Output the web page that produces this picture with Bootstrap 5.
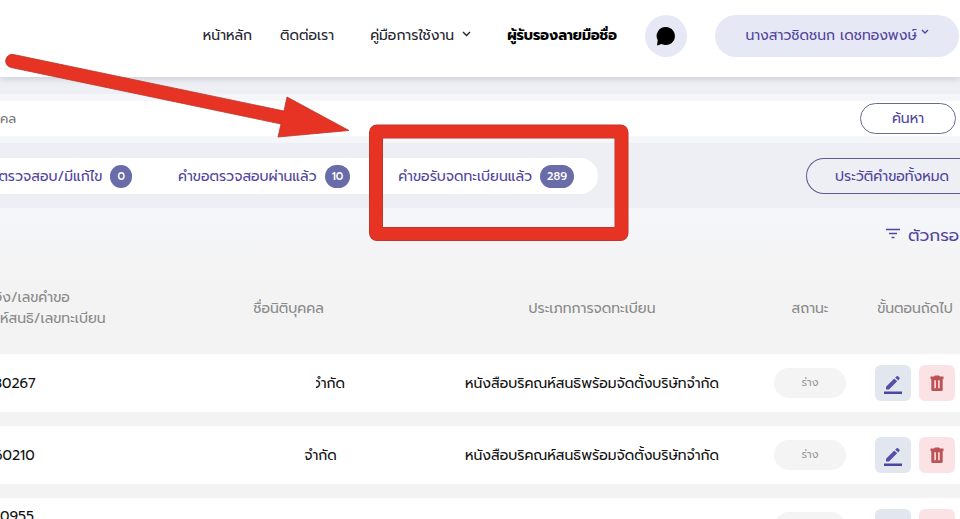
<!DOCTYPE html>
<html lang="th">
<head>
<meta charset="utf-8">
<meta name="viewport" content="width=device-width, initial-scale=1">
<title>คำขอจดทะเบียน</title>
<link href="https://cdn.jsdelivr.net/npm/bootstrap@5.3.0/dist/css/bootstrap.min.css" rel="stylesheet">
<style>
  body { font-family: "Prompt", "Noto Sans Thai", "Noto Sans", sans-serif; font-size: 14px; line-height: 21px; color: #111; background: #f3f3f3; }
  a { text-decoration: none; }
  .page-root { position: relative; overflow: hidden; height: 100vh; }
  .top-bar { height: 77px; padding: 0 1px 6px 0; background: #fff; box-shadow: 0 2px 6px rgba(60,60,90,.18); position: relative; }
  .top-bar a, .top-bar button { white-space: nowrap; }
  .menu-link { color: #24242e; background: none; }
  .menu-gap { margin-right: 36px; }
  .chat-btn { width: 42px; height: 42px; background: #e7e8f5; }
  .user-btn { width: 244px; height: 42px; background: #e7e8f5; color: #51459e; }
  .upper { background: #eeeff4; padding: 17px 0 14px; }
  .search-band { background: #f5f6fa; padding: 7px 0; margin-bottom: 15px; }
  .search-row { background: #fff; height: 35px; padding-right: 4px; }
  .search-row input { font-size: 13px; color: #777; background: none; outline: 0; }
  .search-row input::placeholder { color: #777; opacity: 1; }
  .find-btn { width: 96px; height: 31px; border: 1px solid #6c6a99; color: #51459e; background: #fff; }
  .tab-strip { width: 598px; height: 36px; background: #fff; border-radius: 0 18px 18px 0; }
  .tab-strip a { color: #51459e; white-space: nowrap; }
  .tab-a { width: 132px; }
  .tab-b { margin-left: 46px; }
  .tally { background: #696ca8; color: #fff; font-size: 11px; font-weight: 500; line-height: 23px; padding: 0 7px; border-radius: 12px; }
  .history-btn { width: 154px; height: 36px; border: 1px solid #5c5a90; border-right: 0; border-radius: 18px 0 0 18px; color: #51459e; background: none; padding-left: 28px; white-space: nowrap; }
  .lower { background: linear-gradient(#f5f6fa, #f3f3f3 70px); }
  .filter-btn { width: 74px; height: 54px; font-size: 17px; color: #51459e; background: none; white-space: nowrap; }
  .req-table { width: 100%; table-layout: fixed; border-collapse: separate; border-spacing: 0 14px; }
  .req-table th { height: 64px; padding: 0; font-weight: 400; color: #8a8a8a; white-space: nowrap; }
  .req-table td { height: 58px; padding: 0; background: #fff; }
  .req-table tr > :last-child { padding-left: 14px; }
  .c-no { width: 157px; } .c-name { width: 263px; } .c-status { width: 92px; } .c-next { width: 104px; }
  .num { display: block; margin-left: -6px; }
  .part { display: inline-flex; justify-content: flex-end; overflow: hidden; vertical-align: middle; width: 29px; margin-left: 84px; }
  .name-b { margin-left: 64px; }
  .info-dot { display: inline-block; width: 14px; height: 14px; border-radius: 50%; background: #5650a8; margin-left: 118px; vertical-align: middle; }
  .draft { display: inline-block; width: 72px; line-height: 30px; border-radius: 15px; background: #f4f4f4; color: #999; font-size: 11px; }
  .act { width: 36px; height: 36px; border-radius: 6px; }
  .act-edit { background: #e2e7ef; }
  .act-del { background: #fbe2e4; }
  .marks { position: absolute; left: 0; top: 0; pointer-events: none; }
</style>
<script src="https://cdn.jsdelivr.net/npm/bootstrap@5.3.0/dist/js/bootstrap.bundle.min.js"></script>
</head>
<body>
<svg width="0" height="0" class="position-absolute" aria-hidden="true">
  <symbol id="pen" viewBox="0 0 20 20"><path d="M3 11.700 11.300 3.400l2.900 2.900L6 14.500H3zM12.300 2.500l1.300-1.300q.7-.6 1.400 0l1.400 1.400q.7.700 0 1.400l-1.300 1.400z" fill="#5650a8"/><path d="M1 16.500h18v2.500H1z" fill="#4b44a0"/></symbol>
  <symbol id="bin" viewBox="0 0 16 18"><path fill-rule="evenodd" d="M1.500 1.500H5L6 .5h4l1 1h3.500V4h-.8v10.500q0 1.500-1.500 1.500H3.800q-1.500 0-1.500-1.500V4h-.8zM5.300 5.200v8h1.600v-8zm3.800 0v8h1.600v-8z" fill="#bd5357"/></symbol>
</svg>
<div class="page-root">
  <nav class="top-bar d-flex align-items-center justify-content-end">
    <a href="#" class="menu-link me-4">หน้าหลัก</a>
    <a href="#" class="menu-link menu-gap ms-1">ติดต่อเรา</a>
    <button class="menu-link menu-gap border-0 p-0">คู่มือการใช้งาน<svg class="ms-2 mb-1" width="9" height="6" viewBox="0 0 9 6" fill="none" stroke="#24242e" stroke-width="1.400"><path d="m1 1 3.500 3.500L8 1"/></svg></button>
    <a href="#" class="menu-link fw-bold text-black me-4">ผู้รับรองลายมือชื่อ</a>
    <button class="chat-btn border-0 rounded-circle p-0 ms-1 me-4" aria-label="แชท"><svg width="20" height="20" viewBox="0 0 20 20"><path d="M10 1a9 9 0 1 1-4.200 17L1 19.500l.7-5.300A9 9 0 0 1 10 1z"/></svg></button>
    <button class="user-btn border-0 rounded-pill p-0 ms-1">นางสาวชิดชนก เดชทองพงษ์<svg class="ms-1 mb-2" width="8" height="6" viewBox="0 0 8 6" fill="none" stroke="#51459e" stroke-width="1.400"><path d="m1 1 3 3 3-3"/></svg></button>
  </nav>
  <section class="upper">
    <form class="search-band">
      <div class="search-row d-flex align-items-center">
        <input type="text" class="flex-grow-1 border-0 p-0" placeholder="คล" aria-label="ค้นหานิติบุคคล">
        <button type="button" class="find-btn rounded-pill p-0">ค้นหา</button>
      </div>
    </form>
    <div class="d-flex justify-content-between">
      <div class="tab-strip d-flex align-items-center">
        <a href="#" class="tab-a d-flex justify-content-end align-items-center gap-2">ตรวจสอบ/มีแก้ไข <span class="tally">0</span></a>
        <a href="#" class="tab-b d-flex me-auto align-items-center gap-2">คำขอตรวจสอบผ่านแล้ว <span class="tally">10</span></a>
        <a href="#" class="d-flex me-4 align-items-center gap-2">คำขอรับจดทะเบียนแล้ว <span class="tally">289</span></a>
      </div>
      <button class="history-btn py-0 pe-0 text-start">ประวัติคำขอทั้งหมด</button>
    </div>
  </section>
  <section class="lower">
    <div class="d-flex justify-content-end">
      <button class="filter-btn border-0 p-0 d-flex align-items-center gap-2"><svg class="flex-shrink-0 mb-1" width="14" height="11" viewBox="0 0 14 11" stroke="#51459e" stroke-width="1.500"><path d="M0 1.500h14M3 5.500h8M5.500 9.500h3"/></svg>ตัวกรอ</button>
    </div>
    <table class="req-table">
      <colgroup><col class="c-no"><col class="c-name"><col><col class="c-status"><col class="c-next"></colgroup>
      <thead class="text-center">
        <tr><th class="text-start" scope="col"><span class="num">จิง/เลขคำขอ</span>ห์สนธิ/เลขทะเบียน</th><th scope="col">ชื่อนิติบุคคล</th><th scope="col">ประเภทการจดทะเบียน</th><th scope="col">สถานะ</th><th scope="col">ขั้นตอนถัดไป</th></tr>
      </thead>
      <tbody class="text-center">
        <tr><td class="text-start"><span class="num">30267</span></td><td><span class="part">จำกัด</span></td><td>หนังสือบริคณห์สนธิพร้อมจัดตั้งบริษัทจำกัด</td><td><span class="draft">ร่าง</span></td>
          <td><div class="d-flex gap-2 justify-content-center"><button class="act act-edit border-0 p-0" aria-label="แก้ไข"><svg class="mt-1" width="20" height="20"><use href="#pen"/></svg></button><button class="act act-del border-0 p-0" aria-label="ลบ"><svg width="16" height="18"><use href="#bin"/></svg></button></div></td></tr>
        <tr><td class="text-start"><span class="num">60210</span></td><td><span class="name-b">จำกัด</span></td><td>หนังสือบริคณห์สนธิพร้อมจัดตั้งบริษัทจำกัด</td><td><span class="draft">ร่าง</span></td>
          <td><div class="d-flex gap-2 justify-content-center"><button class="act act-edit border-0 p-0" aria-label="แก้ไข"><svg class="mt-1" width="20" height="20"><use href="#pen"/></svg></button><button class="act act-del border-0 p-0" aria-label="ลบ"><svg width="16" height="18"><use href="#bin"/></svg></button></div></td></tr>
        <tr><td class="text-start align-top pt-2">0955</td><td></td><td><span class="info-dot mb-1"></span></td><td><span class="draft">ร่าง</span></td>
          <td><div class="d-flex gap-2 justify-content-center"><button class="act act-edit border-0 p-0" aria-label="แก้ไข"><svg class="mt-1" width="20" height="20"><use href="#pen"/></svg></button><button class="act act-del border-0 p-0" aria-label="ลบ"><svg width="16" height="18"><use href="#bin"/></svg></button></div></td></tr>
      </tbody>
    </table>
  </section>
  <svg class="marks" width="640" height="250" viewBox="0 0 640 250" aria-hidden="true">
    <path d="M13.500 54.500 284 111l3-14 62 33.500-71 6.500 3-13L11 67.500a6.600 6.600 0 0 1 2.500-13z" fill="#e73323" stroke="#b8362c" stroke-width=".8"/>
    <rect x="376" y="131.500" width="245.500" height="102.500" rx="1" fill="none" stroke="#b8362c" stroke-width="14" stroke-linejoin="round"/>
    <rect x="376" y="131.500" width="245.500" height="102.500" rx="1" fill="none" stroke="#e73323" stroke-width="12.500" stroke-linejoin="round"/>
  </svg>
</div>
</body>
</html>
